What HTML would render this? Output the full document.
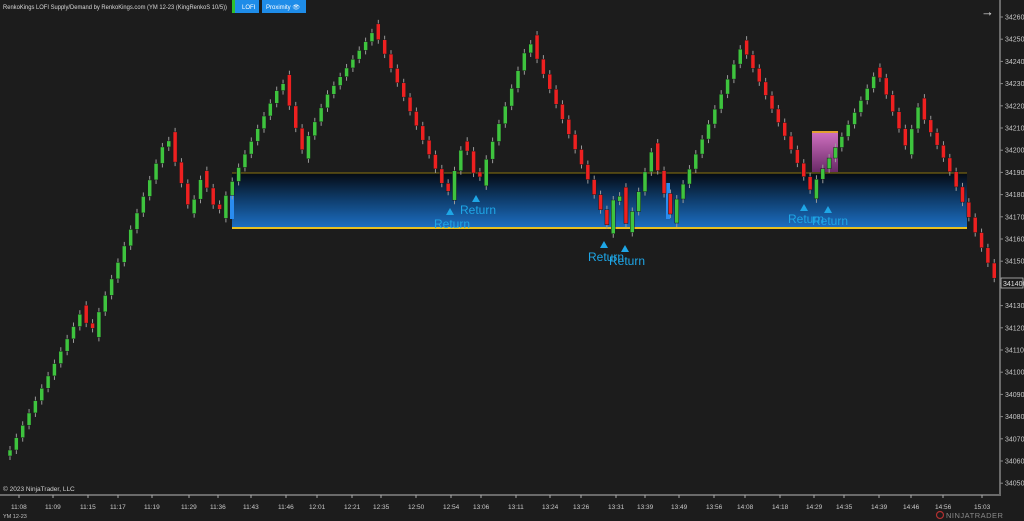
<!DOCTYPE html>
<html><head><meta charset="utf-8"><style>
html,body{margin:0;padding:0;background:#1c1c1c;width:1024px;height:521px;overflow:hidden;font-family:"Liberation Sans",sans-serif}
svg{display:block}
</style></head><body>
<svg id="s" width="1024" height="521" xmlns="http://www.w3.org/2000/svg">
<defs>
<linearGradient id="z" x1="0" y1="0" x2="0" y2="1"><stop offset="0" stop-color="#050a12"/><stop offset="0.5" stop-color="#0f3f70"/><stop offset="1" stop-color="#1c6fc4"/></linearGradient>
<linearGradient id="p" x1="0" y1="0" x2="0" y2="1"><stop offset="0" stop-color="#d070c0"/><stop offset="1" stop-color="#6a2a68"/></linearGradient>
</defs>
<rect width="1024" height="521" fill="#1c1c1c"/>
<g id="zone">
<rect x="232" y="173" width="735" height="55" fill="url(#z)"/>
<line x1="232" y1="173" x2="967" y2="173" stroke="#8a7410" stroke-width="1"/>
<line x1="232" y1="228" x2="967" y2="228" stroke="#e8c020" stroke-width="2"/>
<rect x="230" y="183" width="4" height="36" fill="#2a8cf0"/>
<rect x="666" y="183" width="4" height="36" fill="#2a8cf0"/>
<rect x="812" y="132" width="26" height="40" fill="url(#p)"/>
<line x1="812" y1="132" x2="838" y2="132" stroke="#e0a030" stroke-width="2"/>
</g>
<g id="c"></g>
<g fill="#1ea6e6" font-size="12">
<polygon points="446,215 450,208 454,215"/><text x="434" y="228">Return</text>
<polygon points="472,202 476,195 480,202"/><text x="460" y="214">Return</text>
<polygon points="600,248 604,241 608,248"/><text x="588" y="261">Return</text>
<polygon points="621,252 625,245 629,252"/><text x="609" y="265">Return</text>
<polygon points="800,211 804,204 808,211"/><text x="788" y="223">Return</text>
<polygon points="824,213 828,206 832,213"/><text x="812" y="225">Return</text>
</g>
<line x1="1000" y1="0" x2="1000" y2="496" stroke="#6a6a6a" stroke-width="2"/>
<line x1="0" y1="495" x2="1000" y2="495" stroke="#6a6a6a" stroke-width="2"/>
<g id="ax" fill="#c8c8c8" font-size="7"></g>
<rect x="1001" y="278" width="22" height="10" fill="#1c1c1c" stroke="#bbb" stroke-width="0.8"/>
<text x="1003" y="286" fill="#e0e0e0" font-size="7">34140</text>
<text x="3" y="9" fill="#d8d8d8" font-size="6" textLength="224" lengthAdjust="spacingAndGlyphs">RenkoKings LOFI Supply/Demand by RenkoKings.com (YM 12-23 (KingRenkoS 10/5))</text>
<rect x="232" y="0" width="3" height="13" fill="#2ec02e"/>
<rect x="235" y="0" width="24" height="13" fill="#1e8ce8"/>
<text x="242" y="9" fill="#fff" font-size="6">LOFI</text>
<rect x="262" y="0" width="44" height="13" fill="#1e8ce8"/>
<text x="266" y="9" fill="#fff" font-size="6">Proximity 👁</text>
<text x="981" y="16" fill="#e0e0e0" font-size="13">→</text>
<text x="3" y="491" fill="#d0d0d0" font-size="6.5">© 2023 NinjaTrader, LLC</text>
<text x="3" y="518" fill="#c0c0c0" font-size="5.5">YM 12-23</text>
<circle cx="940" cy="515" r="3.5" fill="none" stroke="#b03030" stroke-width="1.2"/>
<text x="946" y="518" fill="#8a8a8a" font-size="7.5" letter-spacing="0.5">NINJATRADER</text>
</svg>
<script>
(function(){
var NS="http://www.w3.org/2000/svg";
function el(t,a,p){var e=document.createElementNS(NS,t);for(var k in a)e.setAttribute(k,a[k]);p.appendChild(e);return e;}
var ax=document.getElementById('ax');
for(var i=0;i<=21;i++){var yy=17+i*22.2;el('line',{x1:1000,y1:yy,x2:1003,y2:yy,stroke:'#888'},ax);var t=el('text',{x:1005,y:yy+2.5},ax);t.textContent=34260-i*10;}
var tl=[[19,"11:08"],[53,"11:09"],[88,"11:15"],[118,"11:17"],[152,"11:19"],[189,"11:29"],[218,"11:36"],[251,"11:43"],[286,"11:46"],[317,"12:01"],[352,"12:21"],[381,"12:35"],[416,"12:50"],[451,"12:54"],[481,"13:06"],[516,"13:11"],[550,"13:24"],[581,"13:26"],[616,"13:31"],[645,"13:39"],[679,"13:49"],[714,"13:56"],[745,"14:08"],[780,"14:18"],[814,"14:29"],[844,"14:35"],[879,"14:39"],[911,"14:46"],[943,"14:56"],[982,"15:03"]];
tl.forEach(function(a){el('line',{x1:a[0],y1:495,x2:a[0],y2:498,stroke:'#aaa'},ax);var t=el('text',{x:a[0]-8,y:509,'font-size':6.5},ax);t.textContent=a[1];});
var w=[[8,450],[80,310],[88,335],[165,135],[188,212],[200,175],[215,215],[240,160],[280,80],[300,150],[325,95],[372,30],[445,195],[462,140],[475,185],[527,40],[605,225],[615,185],[625,228],[650,150],[668,215],[740,45],[808,190],[838,140],[875,70],[905,150],[915,105],[945,165],[993,280]];
var g=document.getElementById('c');
function yAt(x){for(var j=0;j<w.length-1;j++){if(x>=w[j][0]&&x<=w[j+1][0]){var f=(x-w[j][0])/(w[j+1][0]-w[j][0]);return w[j][1]+f*(w[j+1][1]-w[j][1]);}}return w[w.length-1][1];}
var prev=yAt(8)+6,pd=0;
for(var cx=8;cx<=993;cx+=6.35){
 var cy=yAt(cx);var d=cy<prev?-1:1;
 var tp,bt;
 if(d!=pd&&pd!=0){ if(d<0){tp=cy;bt=prev+9;}else{tp=prev-9;bt=cy;} }
 else{ if(d<0){tp=cy;bt=Math.max(prev,cy+5);}else{tp=Math.min(prev,cy-5);bt=cy;} }
 var col=d<0?'#3ec43e':'#ee2020';
 el('line',{x1:cx+2,y1:tp-4,x2:cx+2,y2:bt+4,stroke:'#9a9a9a','stroke-width':1},g);
 el('rect',{x:cx,y:tp,width:4,height:Math.max(3,bt-tp),fill:col,stroke:'#1a1a1a','stroke-width':0.5},g);
 pd=d;prev=cy;
}
})();
</script>
</body></html>
